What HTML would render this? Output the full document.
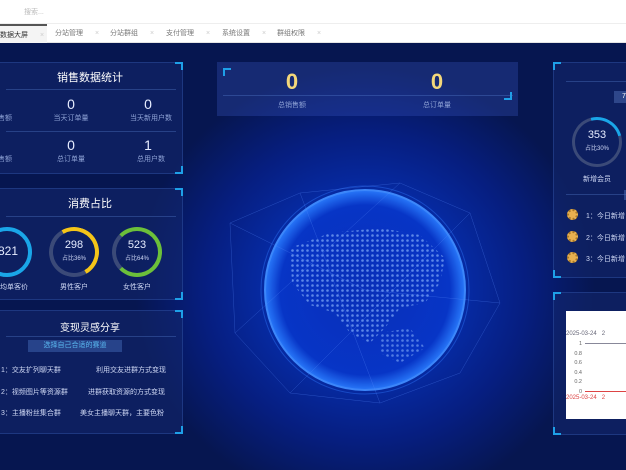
<!DOCTYPE html>
<html><head><meta charset="utf-8"><style>
*{margin:0;padding:0;box-sizing:border-box}
body{width:626px;height:470px;overflow:hidden;font-family:"Liberation Sans","Noto Sans CJK SC",sans-serif;position:relative;background:#06144a}
.top{position:absolute;left:0;top:0;width:626px;height:43px;background:#fff;border-bottom:1px solid #e4e4e4}
.search{position:absolute;left:24px;top:7px;font-size:7px;color:#bbb}
.tabs{position:absolute;left:0;top:23px;height:20px;width:626px;border-top:1px solid #eee;font-size:7px;color:#777}
.tab{position:absolute;top:0;height:19px;line-height:19px}
.tab.act{background:#f4f4f4;border-top:2px solid #555;color:#333}
.tab i{font-style:normal;color:#ccc;margin-left:12px}
.main{position:absolute;left:0;top:43px;width:626px;height:427px;background:radial-gradient(ellipse 230px 220px at 365px 245px,#0838d0 0%,#062ca8 40%,#061e80 70%,#061650 100%)}
.panel{position:absolute;background:rgba(20,40,110,.55);border:1px solid rgba(60,100,190,.35)}
.c{position:absolute;width:8px;height:8px;border-color:#1ea0e8;border-style:solid}
.tl{left:-1px;top:-1px;border-width:2px 0 0 2px}.tr{right:-1px;top:-1px;border-width:2px 2px 0 0}
.bl{left:-1px;bottom:-1px;border-width:0 0 2px 2px}.br{right:-1px;bottom:-1px;border-width:0 2px 2px 0}
.t{position:absolute;color:#fff;font-size:11px;text-align:center}
.n{position:absolute;color:#e6ecff;font-size:14px;text-align:center}
.l{position:absolute;color:#8fa3d6;font-size:7px;text-align:center}
.hr{position:absolute;height:1px;background:rgba(90,130,210,.35)}
.ring{position:absolute;border-radius:50%}
.w{position:absolute;color:#cfd8f5;font-size:7px}
.medal{position:absolute;width:11px;height:11px;border-radius:50%;background:#e8b050;border:2px dotted #a87828}
</style></head><body>
<div class="top">
<div class="search">搜索...</div>
<div class="tabs">
<div class="tab act" style="left:0;width:47px;padding-left:0">数据大屏<i>×</i></div>
<div class="tab" style="left:55px">分站管理<i>×</i></div>
<div class="tab" style="left:110px">分站群组<i>×</i></div>
<div class="tab" style="left:166px">支付管理<i>×</i></div>
<div class="tab" style="left:222px">系统设置<i>×</i></div>
<div class="tab" style="left:277px">群组权限<i>×</i></div>
</div></div>
<div class="main">
<svg style="position:absolute;left:0;top:0" width="626" height="427">
<defs><radialGradient id="g" cx="50%" cy="50%" r="50%"><stop offset="0" stop-color="#0a2fb8"/><stop offset=".85" stop-color="#0836c8"/><stop offset="1" stop-color="#2a7cff"/></radialGradient>
<pattern id="d" width="5" height="5" patternUnits="userSpaceOnUse"><circle cx="2.5" cy="2.5" r="1.3" fill="#7aa4f4"/></pattern></defs>
<circle cx="365" cy="247" r="100" fill="url(#g)" stroke="#3f8cff" stroke-width="2" opacity=".95"/>
<circle cx="365" cy="247" r="104" fill="none" stroke="#2a6cf0" stroke-width="1" opacity=".5"/>
<path d="M290 205 L330 190 L380 185 L420 192 L445 215 L440 240 L425 260 L400 265 L385 285 L370 300 L350 290 L335 270 L310 262 L292 240 Z" fill="url(#d)" opacity=".75"/>
<path d="M380 290 L410 285 L425 305 L400 320 L380 310 Z" fill="url(#d)" opacity=".65"/>
<g stroke="#5a8cff" stroke-width=".5" opacity=".4" fill="none">
<path d="M230 180 L300 150 L400 140 L470 170 L500 260 L460 330 L380 360 L290 350 L235 290 Z"/>
<path d="M230 180 L365 247 L500 260 M300 150 L380 360 M470 170 L290 350 M235 290 L400 140"/>
</g>
</svg>

<div class="panel" style="left:-5px;top:19px;width:188px;height:112px">
<div class="c tr"></div><div class="c br"></div>
<div class="t" style="left:0;width:188px;top:6px">销售数据统计</div>
<div class="hr" style="left:10px;width:170px;top:26px"></div>
<div class="n" style="left:60px;width:30px;top:33px">0</div><div class="l" style="left:50px;width:50px;top:50px">当天订单量</div>
<div class="n" style="left:137px;width:30px;top:33px">0</div><div class="l" style="left:125px;width:60px;top:50px">当天新用户数</div>
<div class="l" style="left:0;width:18px;top:50px">售额</div>
<div class="hr" style="left:10px;width:170px;top:68px"></div>
<div class="n" style="left:60px;width:30px;top:74px">0</div><div class="l" style="left:50px;width:50px;top:91px">总订单量</div>
<div class="n" style="left:137px;width:30px;top:74px">1</div><div class="l" style="left:125px;width:60px;top:91px">总用户数</div>
<div class="l" style="left:0;width:18px;top:91px">售额</div>
</div>

<div class="panel" style="left:-5px;top:145px;width:188px;height:112px">
<div class="c tr"></div><div class="c br"></div>
<div class="t" style="left:0;width:188px;top:6px">消费占比</div>
<div class="hr" style="left:10px;width:170px;top:27px"></div>
<div class="ring" style="left:-14px;top:38px;width:50px;height:50px;border:4px solid #1aa6e8"></div>
<div class="n" style="left:0;width:24px;top:55px;font-size:12px">821</div>
<div class="ring" style="left:53px;top:38px;width:50px;height:50px;border:4px solid #3b4a78;border-top-color:#f5c518;border-right-color:#f5c518;transform:rotate(15deg)"></div>
<div class="n" style="left:53px;width:50px;top:50px;font-size:11px">298</div><div class="l" style="left:53px;width:50px;top:64px;color:#cdd6f5;font-size:6px">占比36%</div>
<div class="ring" style="left:116px;top:38px;width:50px;height:50px;border:4px solid #6cc03a;border-left-color:#3b4a78"></div>
<div class="n" style="left:116px;width:50px;top:50px;font-size:11px">523</div><div class="l" style="left:116px;width:50px;top:64px;color:#cdd6f5;font-size:6px">占比64%</div>
<div class="l" style="left:0;width:36px;top:93px;color:#cfd8f5">均单客价</div>
<div class="l" style="left:53px;width:50px;top:93px;color:#cfd8f5">男性客户</div>
<div class="l" style="left:116px;width:50px;top:93px;color:#cfd8f5">女性客户</div>
</div>

<div class="panel" style="left:-5px;top:267px;width:188px;height:124px">
<div class="c tr"></div><div class="c br"></div>
<div class="t" style="left:0;width:188px;top:8px;font-size:10px">变现灵感分享</div>
<div class="hr" style="left:10px;width:170px;top:25px"></div>
<div style="position:absolute;left:32px;top:29px;width:94px;height:12px;background:rgba(70,110,190,.45);color:#5ab8f0;font-size:7px;text-align:center;line-height:12px">选择自己合适的赛道</div>
<div class="w" style="left:5px;top:54px">1：交友扩列聊天群</div><div class="w" style="left:100px;top:54px">利用交友进群方式变现</div>
<div class="w" style="left:5px;top:76px">2：视频图片等资源群</div><div class="w" style="left:92px;top:76px">进群获取资源的方式变现</div>
<div class="w" style="left:5px;top:97px">3：主播粉丝集合群</div><div class="w" style="left:84px;top:97px">美女主播聊天群，主要色粉</div>
</div>

<div class="panel" style="left:217px;top:19px;width:301px;height:54px;background:rgba(60,90,200,.3);border:none">
<div class="c tl" style="left:6px;top:6px"></div><div class="c br" style="right:6px;bottom:16px"></div>
<div class="hr" style="left:6px;width:290px;top:33px"></div>
<div style="position:absolute;left:60px;width:30px;top:7px;color:#f3d77a;font-size:22px;font-weight:bold;text-align:center">0</div>
<div style="position:absolute;left:205px;width:30px;top:7px;color:#f3d77a;font-size:22px;font-weight:bold;text-align:center">0</div>
<div class="l" style="left:45px;width:60px;top:38px;font-size:7px">总销售额</div>
<div class="l" style="left:190px;width:60px;top:38px;font-size:7px">总订单量</div>
</div>

<div class="panel" style="left:553px;top:19px;width:80px;height:216px">
<div class="c tl"></div><div class="c bl"></div>
<div class="hr" style="left:12px;width:70px;top:18px"></div>
<div style="position:absolute;left:60px;top:28px;width:20px;height:12px;background:rgba(80,110,180,.5);color:#fff;font-size:7px;padding-left:8px;line-height:12px">7</div>
<div class="ring" style="left:18px;top:54px;width:50px;height:50px;border:3px solid #3b4a78;border-top-color:#1aa6e8;transform:rotate(30deg)"></div>
<div class="n" style="left:18px;width:50px;top:66px;font-size:11px">353</div><div class="l" style="left:18px;width:50px;top:80px;color:#cdd6f5;font-size:6px">占比30%</div>
<div class="l" style="left:18px;width:50px;top:111px;color:#cfd8f5">新增会员</div>
<div class="hr" style="left:12px;width:70px;top:131px"></div>
<div style="position:absolute;left:70px;top:127px;width:20px;height:10px;background:rgba(80,110,180,.5)"></div>
<div class="medal" style="left:13px;top:146px"></div>
<div class="medal" style="left:13px;top:168px"></div>
<div class="medal" style="left:13px;top:189px"></div>
<div class="w" style="left:32px;top:148px">1：今日新增</div>
<div class="w" style="left:32px;top:170px">2：今日新增</div>
<div class="w" style="left:32px;top:191px">3：今日新增</div>
</div>
<div class="panel" style="left:553px;top:249px;width:80px;height:143px">
<div class="c tl"></div><div class="c bl"></div>
<div style="position:absolute;left:12px;top:18px;width:70px;height:108px;background:#fff">
<div style="position:absolute;left:0;top:20px;font-size:6px;color:#667">2025-03-24&nbsp;&nbsp;&nbsp;2</div>
<div style="position:absolute;left:7px;top:29px;font-size:5.5px;color:#666;line-height:9.5px;text-align:right;width:9px">1<br>0.8<br>0.6<br>0.4<br>0.2<br>0</div>
<div style="position:absolute;left:19px;top:32px;width:55px;height:1px;background:#889"></div>
<div style="position:absolute;left:19px;top:80px;width:55px;height:1px;background:#d44"></div>
<div style="position:absolute;left:0;top:84px;font-size:6px;color:#d44">2025-03-24&nbsp;&nbsp;&nbsp;2</div>
</div>
</div>
</div>
</body></html>
